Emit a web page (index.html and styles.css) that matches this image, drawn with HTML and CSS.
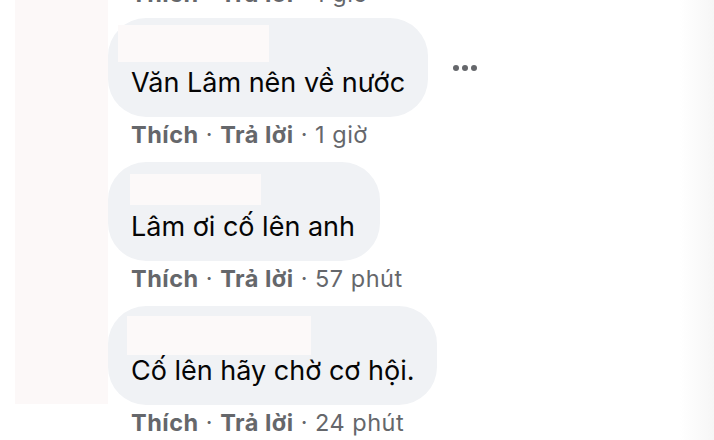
FILE: index.html
```html
<!DOCTYPE html>
<html lang="vi">
<head>
<meta charset="utf-8">
<title>Bình luận</title>
<link rel="stylesheet" href="styles.css">
</head>
<body>
<div class="page">
  <div class="side"></div>
  <div class="comments">
    <div class="actions cut"><b>Thích</b> · <b>Trả lời</b> · 1 giờ</div>

    <div class="comment-row">
      <div class="bubble b1">
        <div class="name"><span class="mask m1"></span></div>
        <div class="text">Văn Lâm nên về nước</div>
      </div>
      <div class="more"><span></span><span></span><span></span></div>
    </div>
    <div class="actions"><b>Thích</b> · <b>Trả lời</b> · 1 giờ</div>

    <div class="comment-row">
      <div class="bubble b2">
        <div class="name"><span class="mask m2"></span></div>
        <div class="text">Lâm ơi cố lên anh</div>
      </div>
    </div>
    <div class="actions"><b>Thích</b> · <b>Trả lời</b> · 57 phút</div>

    <div class="comment-row">
      <div class="bubble b3">
        <div class="name"><span class="mask m3"></span></div>
        <div class="text">Cố lên hãy chờ cơ hội.</div>
      </div>
    </div>
    <div class="actions"><b>Thích</b> · <b>Trả lời</b> · 24 phút</div>
  </div>
</div>
</body>
</html>
```

FILE: styles.css
```css
html, body {
  margin: 0;
  padding: 0;
  background: #ffffff;
}
body {
  width: 714px;
  height: 440px;
  overflow: hidden;
  font-family: Inter, "Liberation Sans", Arial, sans-serif;
}
.page {
  display: flex;
  height: 440px;
  background: linear-gradient(to right, #ffffff 0, #ffffff 680px, #f6f6f6 714px);
}
.side {
  flex-shrink: 0;
  width: 93px;
  height: 404px;
  margin-left: 15px;
  background: #fcf8f8;
}
.comments {
  display: flex;
  flex-direction: column;
  align-items: flex-start;
}
.comment-row {
  display: flex;
  align-items: center;
}
.bubble {
  background: #f0f2f5;
  border-radius: 38px;
  padding: 7px 23px 17px 23px;
  box-sizing: border-box;
  height: 99px;
}
.b1 { width: 320px; }
.b2 { width: 272px; }
.b3 { width: 329px; }
.name {
  height: 42px;
  display: flex;
}
.mask {
  display: block;
  background: #fcf9f9;
}
.m1 { width: 151px; height: 37px; margin-left: -13px; }
.m2 { width: 131px; height: 31px; margin-left: -1px; margin-top: 5px; }
.m3 { width: 184px; height: 39px; margin-left: -4px; margin-top: 3px; }
.text {
  font-size: 27px;
  line-height: 32px;
  color: #050505;
  white-space: nowrap;
}
.more {
  display: flex;
  gap: 3px;
  margin-left: 25px;
}
.more span {
  width: 6px;
  height: 6px;
  border-radius: 50%;
  background: #65676b;
}
.actions {
  font-size: 23.5px;
  letter-spacing: 0.5px;
  line-height: 28px;
  color: #65676b;
  padding-left: 23px;
  margin-top: 4px;
  margin-bottom: 13px;
  white-space: nowrap;
}
.actions b {
  font-weight: 700;
}
.actions.cut {
  margin-top: -20px;
  margin-bottom: 10px;
}
```
